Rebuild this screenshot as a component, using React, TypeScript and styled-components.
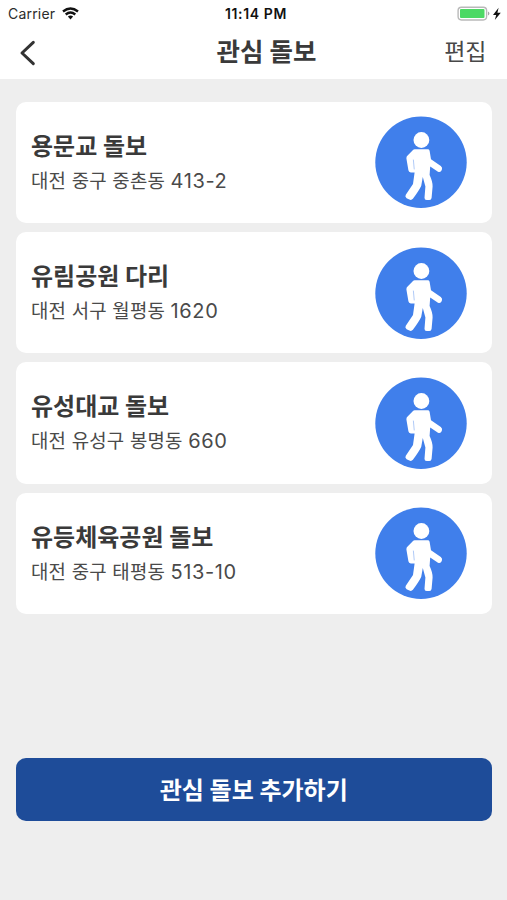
import React from 'react';
import styled, { createGlobalStyle } from 'styled-components';

const GlobalStyle = createGlobalStyle`
  * { box-sizing: border-box; }
  body {
    margin: 0;
    background: #eeeeee;
    color: #3a3a3a;
    font-family: Inter, "Noto Sans CJK KR", sans-serif;
  }
`;

const Screen = styled.div`
  display: flex;
  flex-direction: column;
  width: 507px;
  height: 900px;
  overflow: hidden;
`;

const Top = styled.header`
  flex: none;
  height: 79px;
  background: #ffffff;
`;

const StatusBar = styled.div`
  display: grid;
  grid-template-columns: 1fr auto 1fr;
  align-items: center;
  height: 27px;
  padding: 0 5px 0 8px;
  color: #111;
`;

const Carrier = styled.div`
  display: flex;
  align-items: center;
  gap: 7px;
  font-size: 14px;
  letter-spacing: 0.2px;
  color: #2c2c2c;
`;

const Clock = styled.div`
  padding-left: 2px;
  font-size: 14px;
  font-weight: 600;
  letter-spacing: 0.6px;
`;

const Power = styled.div`
  display: flex;
  justify-content: flex-end;
`;

const NavBar = styled.nav`
  display: grid;
  grid-template-columns: 100px 1fr 100px;
  align-items: center;
  height: 50px;
`;

const BackButton = styled.button`
  display: flex;
  padding: 2px 0 0 19px;
  border: 0;
  background: none;
`;

const NavTitle = styled.h1`
  margin: 0 -20px;
  padding-left: 26px;
  text-align: center;
  white-space: nowrap;
  font-size: 25.5px;
  font-weight: 700;
  line-height: 50px;
`;

const EditButton = styled.button`
  padding: 0 20.5px 0 0;
  border: 0;
  background: none;
  text-align: right;
  font: inherit;
  font-size: 23px;
  line-height: 50px;
  color: #484848;
`;

const List = styled.ul`
  display: flex;
  flex-direction: column;
  gap: 9px;
  margin: 0;
  padding: 22.8px 15.5px 0 16px;
  list-style: none;
`;

const Card = styled.li`
  display: flex;
  align-items: center;
  justify-content: space-between;
  height: 121.3px;
  padding: 0 25px 0 15px;
  border-radius: 10px;
  background: #ffffff;
`;

const CardText = styled.div`
  display: flex;
  flex-direction: column;
  padding-top: 1.4px;
`;

const PlaceName = styled.h2`
  margin: 0;
  font-size: 24px;
  font-weight: 700;
  line-height: 36px;
`;

const Address = styled.p`
  margin: 0;
  font-size: 18.9px;
  font-weight: 400;
  line-height: 32px;
  letter-spacing: 0.2px;
  color: #4a4a4a;
`;

const LotNumber = styled.span`
  font-size: 20px;
  letter-spacing: 0.6px;
`;

const Footer = styled.footer`
  margin-top: auto;
  padding: 0 15.5px 79px 16px;
`;

const AddButton = styled.button`
  display: block;
  width: 100%;
  height: 63px;
  padding: 0 0 2px;
  border: 0;
  border-radius: 10px;
  background: #1e4c99;
  color: #ffffff;
  font: inherit;
  font-size: 24px;
  font-weight: 700;
`;

const WifiIcon = () => (
  <svg width="17" height="13" viewBox="0 0 17 13" fill="none" stroke="#111" strokeWidth="2.4">
    <path d="M1 4.5Q8.5-1.7 16 4.5" />
    <path d="M3.7 7.5Q8.5 3.7 13.3 7.5" />
    <path d="M5.9 9.6Q8.5 7.6 11.1 9.6L8.5 12.4Z" fill="#111" stroke="none" />
  </svg>
);

const BatteryIcon = () => (
  <svg width="45" height="16" viewBox="0 0 45 16">
    <rect x="1.1" y="1.2" width="28.5" height="12.8" rx="3.4" fill="#fff" stroke="#b9b9b9" strokeWidth="1.4" />
    <rect x="3" y="3.1" width="24.5" height="9" rx="1" fill="#4cd964" />
    <path d="M31 5.6Q32.4 6.1 32.4 7.6T31 9.6Z" fill="#a5a5a5" />
    <path d="M41.6 1.8L36 8.9H39.2L37.8 13.9L43.8 6.7H40.4Z" fill="#111" />
  </svg>
);

const ChevronIcon = () => (
  <svg width="18" height="28" viewBox="0 0 18 28" fill="none" stroke="#333" strokeWidth="3" strokeLinecap="round" strokeLinejoin="round">
    <path d="M14.3 3.3L3 14L14.3 24.7" />
  </svg>
);

const WalkerIcon = () => (
  <svg width="92" height="92" viewBox="0 0 92 92">
    <circle cx="46" cy="46.3" r="45.7" fill="#407feb" />
    <g fill="#fff">
      <circle cx="46.4" cy="24" r="7.9" />
      <path d="M39.6 33.3H52.8Q54.2 33.3 54.6 34.7L56 43.2L65.8 50.1Q67.8 51.6 66.8 54.1Q65.5 56.9 63 55.7L55.2 50.5L54.6 59Q57.7 65.5 57.6 70.5L56.6 81.7Q56.4 84 54.4 84H51.7Q49.4 84 49.5 81.7L50.4 70.5L47.8 61L46.2 70Q43.7 75 37.9 82.8Q36.4 84.6 34.4 83.6L31.6 82.2Q29.6 80.8 30.8 78.8L38 68L39.6 56.4H35.8Q33.7 56.4 33.4 54.3L31.4 42.5Q31.2 40.7 32.6 39.5L38 34Q38.7 33.3 39.6 33.3Z" />
    </g>
    <path d="M38.4 44L39.2 53" stroke="#407feb" strokeWidth="0.7" strokeLinecap="round" strokeOpacity="0.6" />
  </svg>
);

const places = [
  { name: '용문교 돌보', district: '대전 중구 중촌동', lot: '413-2' },
  { name: '유림공원 다리', district: '대전 서구 월평동', lot: '1620' },
  { name: '유성대교 돌보', district: '대전 유성구 봉명동', lot: '660' },
  { name: '유등체육공원 돌보', district: '대전 중구 태평동', lot: '513-10' },
];

export default function App() {
  return (
    <Screen>
      <GlobalStyle />
      <Top>
        <StatusBar>
          <Carrier>Carrier <WifiIcon /></Carrier>
          <Clock>11:14 PM</Clock>
          <Power><BatteryIcon /></Power>
        </StatusBar>
        <NavBar>
          <BackButton><ChevronIcon /></BackButton>
          <NavTitle>관심 돌보</NavTitle>
          <EditButton>편집</EditButton>
        </NavBar>
      </Top>
      <List>
        {places.map((place) => (
          <Card key={place.name}>
            <CardText>
              <PlaceName>{place.name}</PlaceName>
              <Address>
                {place.district} <LotNumber>{place.lot}</LotNumber>
              </Address>
            </CardText>
            <WalkerIcon />
          </Card>
        ))}
      </List>
      <Footer>
        <AddButton>관심 돌보 추가하기</AddButton>
      </Footer>
    </Screen>
  );
}
